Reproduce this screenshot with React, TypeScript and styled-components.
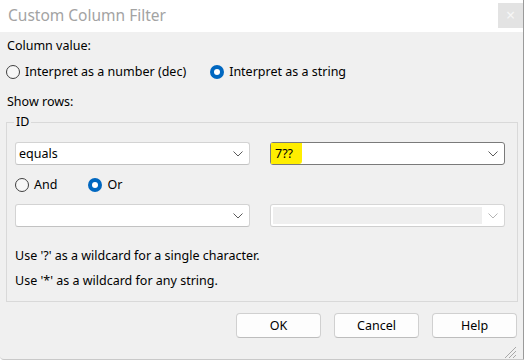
import React from "react";
import styled, { createGlobalStyle } from "styled-components";

const GlobalStyle = createGlobalStyle`
  html, body { margin: 0; padding: 0; background: #ffffff; }
  body { font-family: "Noto Sans", "Open Sans", sans-serif; font-size: 12.5px; color: #000; }
`;

const Window = styled.div`
  width: 524px;
  height: 360px;
  box-sizing: border-box;
  border-right: 1px solid #9a9a9a;
  display: flex;
  flex-direction: column;
  background: #f0f0f0;
  border-bottom: 1px solid #c9c9c9;
  border-bottom-left-radius: 4px;
  overflow: hidden;
`;

const TitleBar = styled.div`
  height: 32px;
  flex: none;
  background: #ffffff;
  display: flex;
  align-items: flex-start;
  justify-content: space-between;
`;

const Title = styled.div`
  font-size: 15.5px;
  line-height: 22px;
  color: #a3a3a3;
  padding: 4px 0 0 8px;
`;

const CloseButton = styled.div`
  width: 25px;
  height: 25px;
  margin: 3px 0 0 0;
  background: #e3e3e3;
  color: #f6f6f6;
  font-size: 16px;
  line-height: 24px;
  text-align: center;
`;

const Body = styled.div`
  flex: 1;
  padding: 6px 6px 0 7px;
  display: flex;
  flex-direction: column;
`;

const Label = styled.div<{ $mt?: number }>`
  line-height: 16px;
  height: 16px;
  margin-top: ${(p) => p.$mt ?? 0}px;
  white-space: nowrap;
`;

const RadioRow = styled.div<{ $mt: number; $gap: number; $ml?: number }>`
  display: flex;
  align-items: center;
  height: 16px;
  margin-top: ${(p) => p.$mt}px;
  margin-left: ${(p) => p.$ml ?? 0}px;
  gap: ${(p) => p.$gap}px;
`;

const RadioItem = styled.label`
  display: flex;
  align-items: center;
  gap: 5px;
  line-height: 16px;
  white-space: nowrap;
`;

const RadioCircle = styled.span<{ $checked?: boolean }>`
  width: 14px;
  height: 14px;
  box-sizing: border-box;
  border-radius: 50%;
  flex: none;
  border: ${(p) => (p.$checked ? "none" : "1px solid #404040")};
  background: ${(p) => (p.$checked ? "#0067c0" : "#f7f7f7")};
  display: flex;
  align-items: center;
  justify-content: center;
  &::after {
    content: "";
    display: ${(p) => (p.$checked ? "block" : "none")};
    width: 6px;
    height: 6px;
    border-radius: 50%;
    background: #ffffff;
  }
`;

const Group = styled.fieldset`
  margin: 4px 0 0 -1px;
  width: 512px;
  box-sizing: border-box;
  border: 1px solid #d9d9d9;
  padding: 12px 8px 12px 8px;
  display: flex;
  flex-direction: column;
`;

const Legend = styled.legend`
  padding: 0 2px;
  margin-left: -1px;
  line-height: 16px;
`;

const ComboRow = styled.div<{ $mt?: number }>`
  display: grid;
  grid-template-columns: 235px 235px;
  column-gap: 20px;
  margin-top: ${(p) => p.$mt ?? 0}px;
`;

const Combo = styled.div<{ $focused?: boolean; $disabled?: boolean }>`
  height: 23px;
  box-sizing: border-box;
  background: #ffffff;
  border: 1px solid ${(p) => (p.$focused ? "#7a7a7a" : p.$disabled ? "#d6d6d6" : "#d3d3d3")};
  border-bottom-color: ${(p) => (p.$focused ? "#7a7a7a" : p.$disabled ? "#cfcfcf" : "#c2c2c2")};
  border-radius: 3px;
  display: flex;
  align-items: stretch;
`;

const ComboText = styled.div`
  flex: 1;
  display: flex;
  align-items: center;
  padding-left: 3px;
  line-height: 16px;
`;

const DisabledField = styled.div`
  flex: 1;
  margin: 2px 0 2px 2px;
  background: #efefef;
`;

const Highlight = styled.span`
  background: #ffee00;
  margin-left: -3px;
  padding: 3px 9px 3px 4px;
  align-self: stretch;
  display: flex;
  align-items: center;
  border-bottom-right-radius: 3px;
`;

const ChevronBox = styled.div`
  width: 22px;
  flex: none;
  display: flex;
  align-items: center;
  justify-content: center;
`;

const Hint = styled.div<{ $mt: number }>`
  line-height: 16px;
  height: 16px;
  margin-top: ${(p) => p.$mt}px;
  white-space: nowrap;
`;

const ButtonRow = styled.div`
  display: flex;
  justify-content: flex-end;
  gap: 13px;
  margin-top: 11px;
  width: 510px;
`;

const Button = styled.div`
  width: 85px;
  height: 25px;
  box-sizing: border-box;
  background: #fdfdfd;
  border: 1px solid #d0d0d0;
  border-bottom-color: #bdbdbd;
  border-radius: 4px;
  display: flex;
  align-items: center;
  justify-content: center;
  line-height: 16px;
`;

const Footer = styled.div`
  flex: 1;
  display: flex;
  justify-content: flex-end;
  align-items: flex-end;
`;

const Chevron = ({ color = "#5a5a5a" }: { color?: string }) => (
  <svg width="10" height="6" viewBox="0 0 10 6">
    <path d="M0.5 0.5 L5 5 L9.5 0.5" fill="none" stroke={color} strokeWidth="1" />
  </svg>
);

const Grip = () => (
  <svg width="13" height="13" viewBox="0 0 13 13">
    <path d="M12 1 L1 12 M12 5 L5 12 M12 9 L9 12" stroke="#a8a8a8" strokeWidth="1" />
  </svg>
);

const Radio = ({ label, checked }: { label: string; checked?: boolean }) => (
  <RadioItem>
    <RadioCircle $checked={checked} />
    {label}
  </RadioItem>
);

export default function App() {
  return (
    <>
      <GlobalStyle />
      <Window>
        <TitleBar>
          <Title>Custom Column Filter</Title>
          <CloseButton>×</CloseButton>
        </TitleBar>
        <Body>
          <Label>Column value:</Label>
          <RadioRow $mt={10} $gap={24} $ml={-1}>
            <Radio label="Interpret as a number (dec)" />
            <Radio label="Interpret as a string" checked />
          </RadioRow>
          <Label $mt={14}>Show rows:</Label>
          <Group>
            <Legend>ID</Legend>
            <ComboRow>
              <Combo>
                <ComboText>equals</ComboText>
                <ChevronBox><Chevron /></ChevronBox>
              </Combo>
              <Combo $focused>
                <ComboText><Highlight>7??</Highlight></ComboText>
                <ChevronBox><Chevron /></ChevronBox>
              </Combo>
            </ComboRow>
            <RadioRow $mt={12} $gap={31}>
              <Radio label="And" />
              <Radio label="Or" checked />
            </RadioRow>
            <ComboRow $mt={11}>
              <Combo>
                <ComboText />
                <ChevronBox><Chevron /></ChevronBox>
              </Combo>
              <Combo $disabled>
                <DisabledField />
                <ChevronBox><Chevron color="#b5b5b5" /></ChevronBox>
              </Combo>
            </ComboRow>
            <Hint $mt={21}>Use '?' as a wildcard for a single character.</Hint>
            <Hint $mt={9}>Use '*' as a wildcard for any string.</Hint>
          </Group>
          <ButtonRow>
            <Button>OK</Button>
            <Button>Cancel</Button>
            <Button>Help</Button>
          </ButtonRow>
          <Footer>
            <Grip />
          </Footer>
        </Body>
      </Window>
    </>
  );
}
